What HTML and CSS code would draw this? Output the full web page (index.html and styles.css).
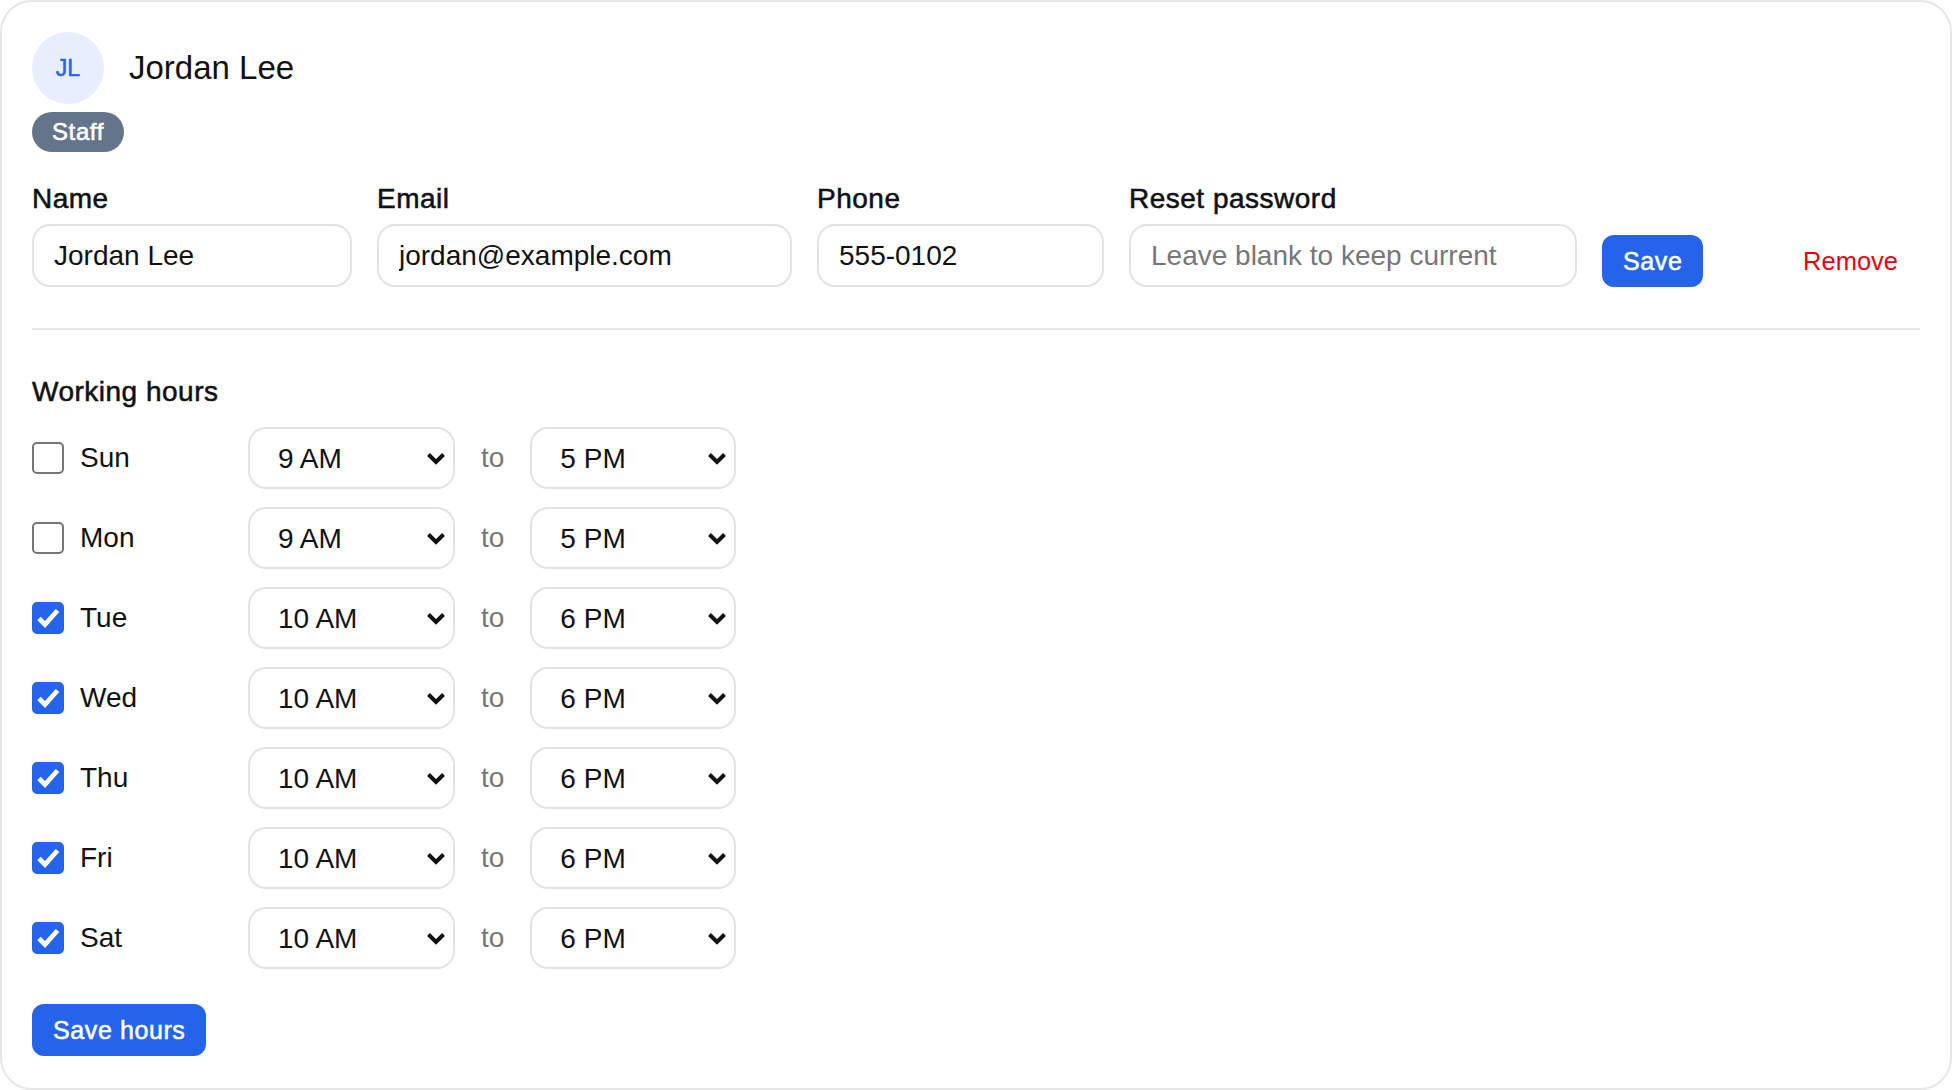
FILE: index.html
```html
<!DOCTYPE html>
<html lang="en">
<head>
    <meta charset="UTF-8">
    <title>Jordan Lee · Staff</title>
    <link rel="stylesheet" href="styles.css">
</head>
<body>
<div class="card">
    <div class="profile">
        <div class="avatar">JL</div>
        <h1>Jordan Lee</h1>
    </div>
    <span class="badge">Staff</span>

    <form class="details">
        <div class="field f-name">
            <label for="name">Name</label>
            <input id="name" type="text" value="Jordan Lee">
        </div>
        <div class="field f-email">
            <label for="email">Email</label>
            <input id="email" type="email" value="jordan@example.com">
        </div>
        <div class="field f-phone">
            <label for="phone">Phone</label>
            <input id="phone" type="tel" value="555-0102">
        </div>
        <div class="field f-pass">
            <label for="password">Reset password</label>
            <input id="password" type="password" placeholder="Leave blank to keep current">
        </div>
        <button type="button" class="btn btn-primary">Save</button>
        <button type="button" class="btn btn-danger">Remove</button>
    </form>

    <section class="hours">
        <h2>Working hours</h2>

        <div class="day-row">
            <label class="day"><input type="checkbox"> Sun</label>
            <select class="hour from" data-value="9"></select>
            <span class="to">to</span>
            <select class="hour until" data-value="17"></select>
        </div>
        <div class="day-row">
            <label class="day"><input type="checkbox"> Mon</label>
            <select class="hour from" data-value="9"></select>
            <span class="to">to</span>
            <select class="hour until" data-value="17"></select>
        </div>
        <div class="day-row">
            <label class="day"><input type="checkbox" checked> Tue</label>
            <select class="hour from" data-value="10"></select>
            <span class="to">to</span>
            <select class="hour until" data-value="18"></select>
        </div>
        <div class="day-row">
            <label class="day"><input type="checkbox" checked> Wed</label>
            <select class="hour from" data-value="10"></select>
            <span class="to">to</span>
            <select class="hour until" data-value="18"></select>
        </div>
        <div class="day-row">
            <label class="day"><input type="checkbox" checked> Thu</label>
            <select class="hour from" data-value="10"></select>
            <span class="to">to</span>
            <select class="hour until" data-value="18"></select>
        </div>
        <div class="day-row">
            <label class="day"><input type="checkbox" checked> Fri</label>
            <select class="hour from" data-value="10"></select>
            <span class="to">to</span>
            <select class="hour until" data-value="18"></select>
        </div>
        <div class="day-row">
            <label class="day"><input type="checkbox" checked> Sat</label>
            <select class="hour from" data-value="10"></select>
            <span class="to">to</span>
            <select class="hour until" data-value="18"></select>
        </div>

        <button type="button" class="btn btn-primary save-hours">Save hours</button>
    </section>
</div>

<script>
    // Fill every hour picker with 12 AM .. 11 PM and pick its stored value
    const hourLabels = [];
    for (let h = 0; h < 24; h++) {
        const hr = h % 12 === 0 ? 12 : h % 12;
        hourLabels.push(`${hr} ${h < 12 ? 'AM' : 'PM'}`);
    }
    document.querySelectorAll('select.hour').forEach(sel => {
        hourLabels.forEach((text, h) => sel.add(new Option(text, h)));
        sel.value = sel.dataset.value;
    });
</script>
</body>
</html>
```

FILE: styles.css
```css
* { box-sizing: border-box; }
html, body { margin: 0; }
body {
    font-family: "Liberation Sans", Arial, sans-serif;
    color: #111;
    background: #fff;
}
.card {
    height: 100vh;
    border: 2px solid #e6e6e6;
    border-radius: 32px;
    padding: 30px 30px 32px;
}

/* header: avatar, name, role */
.profile {
    display: flex;
    align-items: center;
    gap: 25px;
}
.avatar {
    width: 72px; height: 72px;
    border-radius: 50%;
    background: #e8eefd;
    color: #2563eb;
    display: flex;
    align-items: center;
    justify-content: center;
    font-size: 23px;
    font-weight: 400;
    -webkit-text-stroke: 0.5px currentColor;
}
.profile h1 {
    margin: 0;
    font-size: 33px;
    font-weight: 400;
}
.badge {
    display: block;
    width: fit-content;
    margin-top: 8px;
    padding: 0 20px;
    line-height: 40px;
    border-radius: 20px;
    background: #64748b;
    color: #fff;
    font-size: 24px;
    font-weight: 400;
    -webkit-text-stroke: 0.6px currentColor;
    letter-spacing: 0.6px;
}

/* account fields */
.details {
    display: flex;
    align-items: flex-end;
    gap: 25px;
    margin: 31px 0 0;
    padding-bottom: 41px;
    border-bottom: 2px solid #e6e6e6;
}
.field {
    display: flex;
    flex-direction: column;
    gap: 9px;
}
/* medium-weight text: regular face, lightly stroked */
.field label,
.hours h2,
.btn-primary {
    font-weight: 400;
    -webkit-text-stroke: 0.55px currentColor;
    letter-spacing: 0.5px;
}
.field label {
    font-size: 28px;
    line-height: 32px;
}
.f-name { width: 320px; }
.f-email { width: 415px; }
.f-phone { width: 287px; }
.f-pass { width: 448px; }
.field input {
    width: 100%;
    height: 63px;
    padding: 1px 20px 0;
    border: 2px solid #e3e3e3;
    border-radius: 18px;
    font: inherit;
    font-size: 28px;
    color: #111;
    outline: none;
}
.field input::placeholder { color: #777; }

.btn {
    height: 52px;
    padding: 0 21px;
    border: 0;
    border-radius: 12px;
    font-family: inherit;
    font-size: 25px;
    cursor: pointer;
}
.btn-primary {
    background: #2563eb;
    color: #fff;
    letter-spacing: 0.6px;
}
.btn-danger {
    margin-left: auto;
    padding-right: 22px;
    background: none;
    color: #e3000f;
    font-size: 25.5px;
    font-weight: 400;
}

/* weekly schedule */
.hours { padding-top: 46px; }
.hours h2 {
    margin: 0 0 20px;
    font-size: 28px;
    line-height: 31px;
}
.day-row {
    display: flex;
    align-items: center;
    gap: 26px;
}
.day-row + .day-row { margin-top: 18px; }
.day {
    width: 190px;
    display: flex;
    align-items: center;
    gap: 16px;
    font-size: 28px;
}
.day input {
    appearance: none;
    width: 32px; height: 32px;
    margin: 0;
    border: 2px solid #767676;
    border-radius: 5px;
    background: #fff;
}
.day input:checked {
    border-color: #2563eb;
    background: #2563eb url("data:image/svg+xml,%3Csvg xmlns='http://www.w3.org/2000/svg' viewBox='0 0 28 28'%3E%3Cpath d='M5 14.5l6 6 12.5-14' fill='none' stroke='%23fff' stroke-width='4.8'/%3E%3C/svg%3E") center / 100% 100% no-repeat;
}
.hour {
    appearance: none;
    height: 62px;
    padding: 1px 40px 0 28px;
    border: 2px solid #e3e3e3;
    border-radius: 18px;
    background: #fff url("data:image/svg+xml,%3Csvg xmlns='http://www.w3.org/2000/svg' width='20' height='13' viewBox='0 0 20 13'%3E%3Cpath d='M2.5 2.5l7.5 7.5 7.5-7.5' fill='none' stroke='%23111' stroke-width='4'/%3E%3C/svg%3E") right 7px center no-repeat;
    font: inherit;
    font-size: 28px;
    color: #111;
}
.hour.from { width: 207px; }
.hour.until { width: 206px; }
.to {
    font-size: 28px;
    color: #777;
}
.save-hours { margin-top: 35px; }
```
